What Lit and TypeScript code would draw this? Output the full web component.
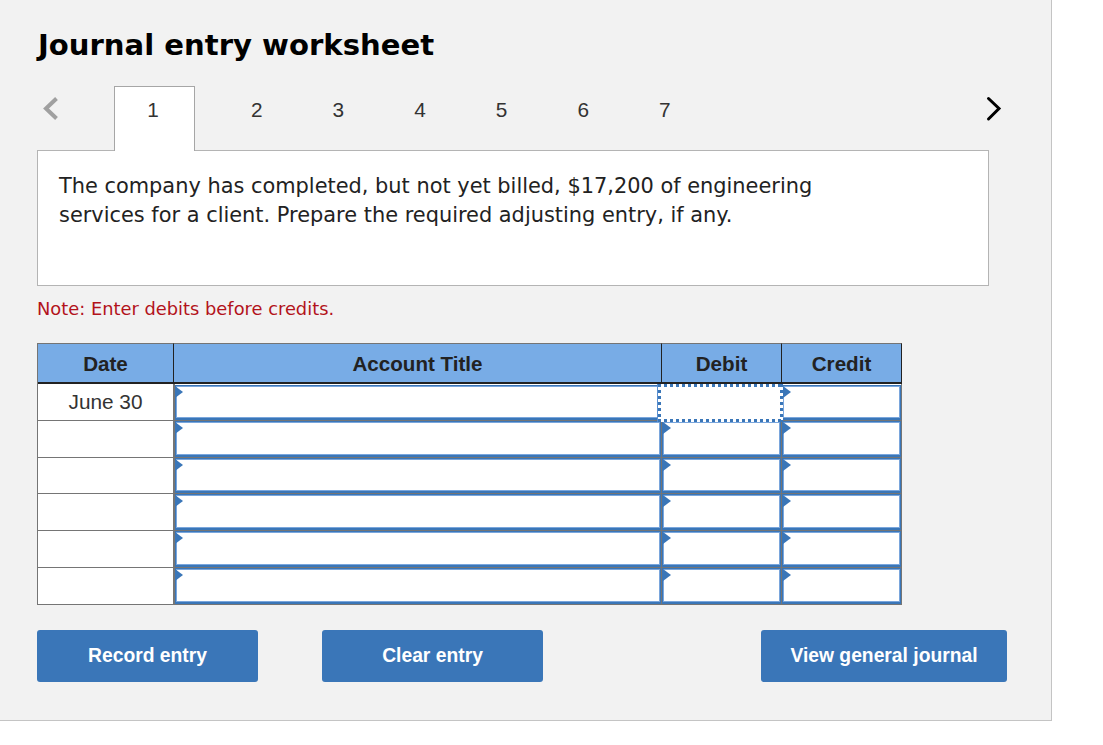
import { LitElement, css, html } from "lit";
import { customElement } from "lit/decorators.js";

const TABS = [1, 2, 3, 4, 5, 6, 7];
const ROWS = ["June 30", "", "", "", "", ""];

@customElement("app-root")
export class AppRoot extends LitElement {
  static styles = css`
    :host {
      display: block;
      width: 1052px;
      height: 721px;
      box-sizing: border-box;
      background: #f2f2f2;
      border-right: 1px solid #c4c4c4;
      border-bottom: 1px solid #c4c4c4;
      padding: 26px 0 0 37px;
      font-family: "Liberation Sans", Arial, sans-serif;
      color: #222;
    }
    h1 {
      margin: 0;
      padding-left: 1px;
      height: 38px;
      font: bold 29.1px/38px "DejaVu Sans", Verdana, sans-serif;
      color: #000;
    }
    .nav {
      display: flex;
      align-items: flex-start;
      width: 963px;
      height: 65px;
      margin-top: 22px;
    }
    .arrow {
      width: 77px;
      height: 44px;
      flex: none;
    }
    .arrow svg {
      display: block;
      margin: 8px 0 0 4px;
    }
    .arrow.next {
      margin-left: auto;
      width: 20px;
    }
    .tabs {
      display: flex;
    }
    .tab {
      width: 81.6px;
      height: 47px;
      box-sizing: border-box;
      padding-top: 11px;
      text-align: center;
      font-size: 20.8px;
      line-height: 25px;
      color: #333;
    }
    .tab.on {
      position: relative;
      z-index: 1;
      width: 81px;
      height: 65px;
      margin-right: 21px;
      background: #fff;
      border: 1px solid #a6a6a6;
      border-bottom: 0;
      padding-top: 10px;
      padding-right: 3px;
    }
    .prompt {
      box-sizing: border-box;
      width: 952px;
      height: 136px;
      margin-top: -1px;
      padding: 21px 21px;
      background: #fff;
      border: 1px solid #b4b4b4;
      font: 20.9px/29px "DejaVu Sans", Verdana, sans-serif;
      color: #222;
    }
    .prompt p {
      margin: 0;
      width: 800px;
    }
    .note {
      margin-top: 11px;
      height: 24px;
      font: 17.85px/24px "DejaVu Sans", Verdana, sans-serif;
      color: #b3131b;
    }
    .sheet {
      display: grid;
      grid-template-columns: 136px 488px 120px 120px;
      grid-template-rows: 41px repeat(6, 36.8px);
      width: 865px;
      margin-top: 22px;
      box-sizing: border-box;
      background: #fff;
      border-left: 1px solid #757575;
    }
    .head {
      display: flex;
      align-items: center;
      justify-content: center;
      box-sizing: border-box;
      padding-top: 1px;
      background: #78ace6;
      border-top: 1px solid #757575;
      border-bottom: 2px solid #222;
      border-right: 1px solid #222;
      font-size: 20.6px;
      font-weight: bold;
      color: #222;
    }
    .date {
      display: flex;
      align-items: center;
      justify-content: center;
      box-sizing: border-box;
      border-bottom: 1px solid #757575;
      border-right: 1px solid #757575;
      font-size: 20.8px;
      color: #333;
    }
    .slot {
      position: relative;
      box-sizing: border-box;
      min-height: 0;
      border-right: 1px solid #757575;
      border-bottom: 1px solid #757575;
    }
    .slot.account {
      border-left: 1px solid #757575;
    }
    .slot.first {
      padding-top: 1px;
    }
    .cell {
      position: relative;
      box-sizing: border-box;
      height: 100%;
      background: #fff;
      border: 1px solid #3a76b8;
      border-bottom-width: 2px;
      box-shadow: inset 0 0 0 1px #7aa6dc;
    }
    .cell::before {
      content: "";
      position: absolute;
      left: 0;
      top: 0;
      border-left: 8px solid #3a76b8;
      border-top: 6px solid transparent;
      border-bottom: 6px solid transparent;
    }
    .account .cell::before {
      left: -1px;
    }
    .focus {
      position: absolute;
      z-index: 1;
      left: -4px;
      top: 0;
      width: 125px;
      height: 38px;
      background-color: #fff;
      box-shadow: -1px 0 0 #5a8fd0;
      background-image:
        linear-gradient(90deg, #3a76b8 3px, transparent 3px),
        linear-gradient(90deg, #3a76b8 3px, transparent 3px),
        linear-gradient(#3a76b8 3px, transparent 3px),
        linear-gradient(#3a76b8 3px, transparent 3px);
      background-size: 6px 3px, 6px 3px, 3px 6px, 3px 6px;
      background-position: 0 0, 0 100%, 0 0, 100% 0;
      background-repeat: repeat-x, repeat-x, repeat-y, repeat-y;
    }
    .actions {
      display: flex;
      width: 970px;
      margin-top: 25px;
    }
    .actions button {
      height: 52px;
      padding: 0;
      border: 0;
      border-radius: 3px;
      background: #3a76b8;
      color: #fff;
      font: bold 19.3px "Liberation Sans", Arial, sans-serif;
    }
    .record,
    .clear {
      width: 221px;
    }
    .clear {
      margin-left: 64px;
      margin-right: auto;
    }
    .view {
      width: 246px;
    }
  `;

  render() {
    return html`
      <h1>Journal entry worksheet</h1>
      <div class="nav">
        <div class="arrow">
          <svg width="20" height="30" viewBox="0 0 20 30">
            <path d="M15.5 4.5 L5 14.5 L15.5 24.5" fill="none" stroke="#a0a0a0" stroke-width="4" />
          </svg>
        </div>
        <div class="tabs">
          ${TABS.map((t) => html`<div class="tab ${t === 1 ? "on" : ""}">${t}</div>`)}
        </div>
        <div class="arrow next">
          <svg width="20" height="30" viewBox="0 0 20 30">
            <path d="M4.5 4.5 L15 14.5 L4.5 25" fill="none" stroke="#000" stroke-width="3" stroke-linecap="round" />
          </svg>
        </div>
      </div>
      <div class="prompt">
        <p>The company has completed, but not yet billed, $17,200 of engineering services for a client. Prepare the required adjusting entry, if any.</p>
      </div>
      <div class="note">Note: Enter debits before credits.</div>
      <div class="sheet">
        <div class="head">Date</div>
        <div class="head">Account Title</div>
        <div class="head">Debit</div>
        <div class="head">Credit</div>
        ${ROWS.map(
          (d, i) => html`
            <div class="date">${d}</div>
            <div class="slot account ${i === 0 ? "first" : ""}"><div class="cell"></div></div>
            <div class="slot ${i === 0 ? "first" : ""}">${i === 0 ? html`<div class="focus"></div>` : html`<div class="cell"></div>`}</div>
            <div class="slot ${i === 0 ? "first" : ""}"><div class="cell"></div></div>
          `
        )}
      </div>
      <div class="actions">
        <button class="record">Record entry</button>
        <button class="clear">Clear entry</button>
        <button class="view">View general journal</button>
      </div>
    `;
  }
}
